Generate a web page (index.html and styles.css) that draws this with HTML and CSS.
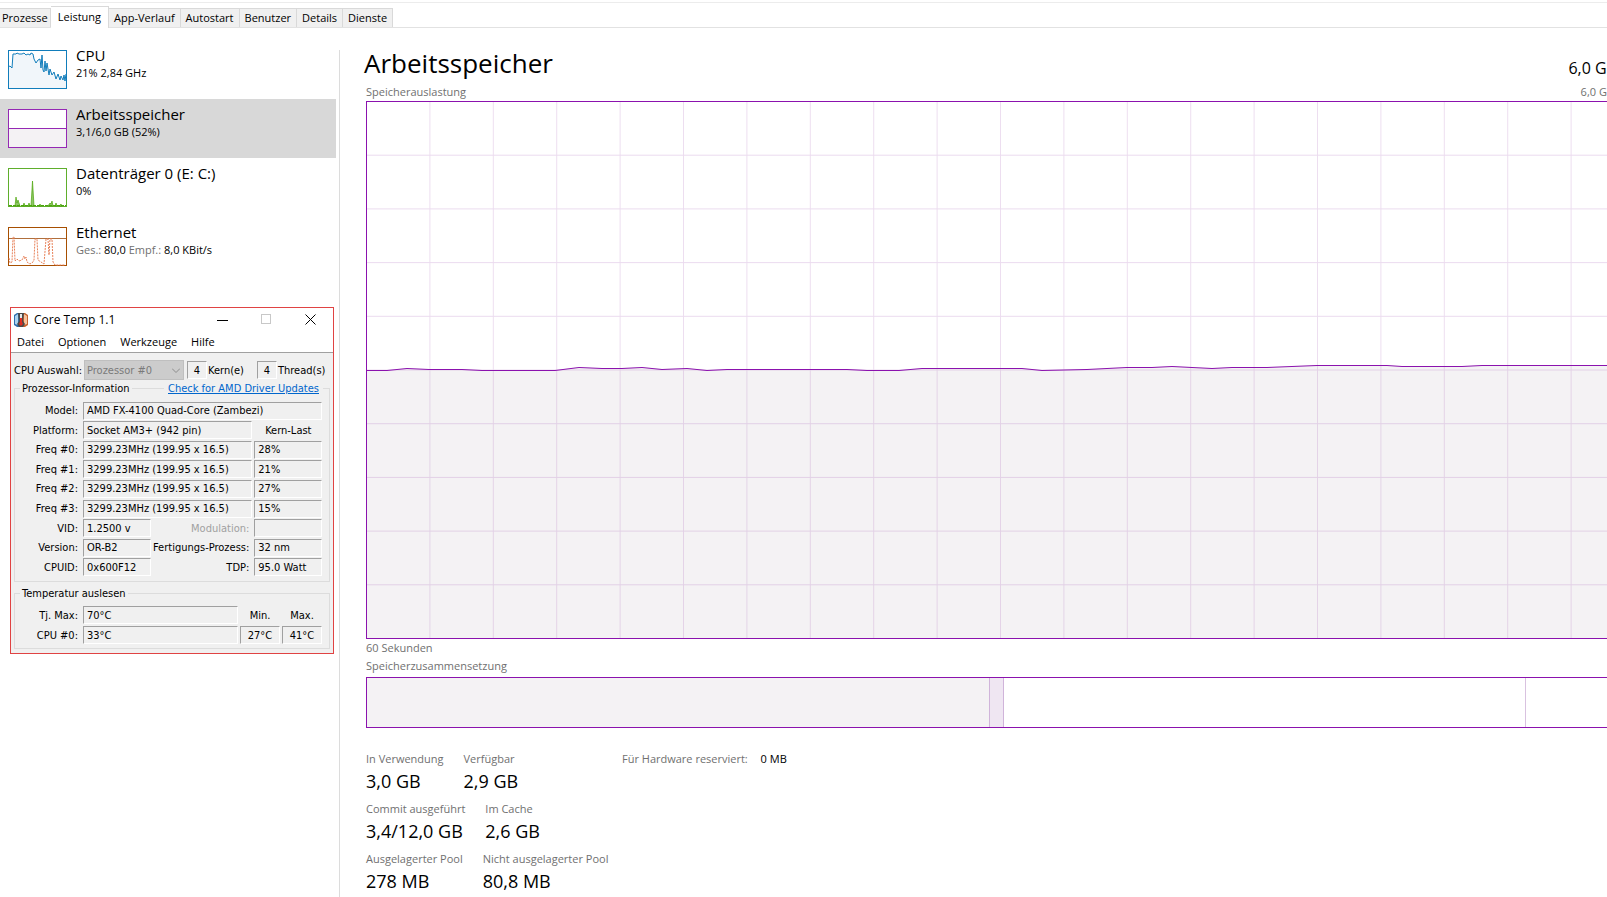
FILE: index.html
```html
<!DOCTYPE html>
<html lang="de">
<head>
    <meta charset="UTF-8">
    <meta name="viewport" content="width=device-width, initial-scale=1.0">
    <title>Task-Manager</title>
    <link rel="stylesheet" href="styles.css">
</head>
<body>

<div class="tabs" role="tablist">
    <button class="tab" role="tab">Prozesse</button>
    <button class="tab active" role="tab" aria-selected="true">Leistung</button>
    <button class="tab" role="tab">App-Verlauf</button>
    <button class="tab" role="tab">Autostart</button>
    <button class="tab" role="tab">Benutzer</button>
    <button class="tab" role="tab">Details</button>
    <button class="tab" role="tab">Dienste</button>
</div>

<div class="content">
    <div class="sidebar">
        <button class="item">
            <svg class="thumb" viewBox="0 0 59 39">
                <rect x="0.5" y="0.5" width="58" height="38" fill="#fff"/>
                <path d="M0 17L2 16L4 18L5 4L8 4L9 3L11 4L14 4L16 3L18 5L20 4L22 5L23 3L25 4L26 9L28 13L30 10L32 9L33 18L34 5L35 20L36 22L37 11L38 21L39 13L41 25L42 19L44 25L46 22L48 29L50 24L52 30L53 26L55 30L56 25L57 31L58 24L58 38L0 38Z" fill="#f1f6fa"/>
                <path d="M0 17L2 16L4 18L5 4L8 4L9 3L11 4L14 4L16 3L18 5L20 4L22 5L23 3L25 4L26 9L28 13L30 10L32 9L33 18L34 5L35 20L36 22L37 11L38 21L39 13L41 25L42 19L44 25L46 22L48 29L50 24L52 30L53 26L55 30L56 25L57 31L58 24" fill="none" stroke="#117dbb"/>
                <rect x="0.5" y="0.5" width="58" height="38" fill="none" stroke="#117dbb"/>
            </svg>
            <span class="item-text">
                <span class="item-title">CPU</span>
                <span class="item-sub">21% 2,84 GHz</span>
            </span>
        </button>
        <button class="item selected">
            <svg class="thumb" viewBox="0 0 59 39">
                <rect x="0.5" y="0.5" width="58" height="38" fill="#fff"/>
                <rect x="1" y="19" width="57" height="19" fill="#f4f2f4"/>
                <path d="M0 19.5H59" stroke="#9528b4"/>
                <rect x="0.5" y="0.5" width="58" height="38" fill="none" stroke="#9528b4"/>
            </svg>
            <span class="item-text">
                <span class="item-title">Arbeitsspeicher</span>
                <span class="item-sub">3,1/6,0 GB (52%)</span>
            </span>
        </button>
        <button class="item">
            <svg class="thumb" viewBox="0 0 59 39">
                <rect x="0.5" y="0.5" width="58" height="38" fill="#fff" stroke="#5fae2c"/>
                <path d="M7 38L8 29L9 35L10 32L12 38ZM15 38L16 35L17 38ZM20 38L21 35L22 38ZM23 38L24.5 13L26 38ZM31 38L32 36L33 38ZM40 38L42 35L43 36L44 33L45 38ZM47 38L48 35L49 38ZM51 38L53 36L54 38Z" fill="#8cc465" stroke="#4da60c" stroke-width="0.7"/>
                <path d="M1 37.5H58" stroke="#4da60c" stroke-dasharray="3 1"/>
            </svg>
            <span class="item-text">
                <span class="item-title">Datenträger 0 (E: C:)</span>
                <span class="item-sub">0%</span>
            </span>
        </button>
        <button class="item">
            <svg class="thumb" viewBox="0 0 59 39">
                <rect x="0.5" y="0.5" width="58" height="38" fill="#fff" stroke="#a74f01"/>
                <path d="M1 11.5H58" stroke="#b06f3c"/>
                <path d="M1 31L2 36L4 35L5 10L6 10L7 34L9 32L11 34L14 33L16 29L17 32L18 30L19 35L22 37L25 35L26 33L27 12L29 12L30 33L33 35L36 37L38 12L40 12L41 28L42 12L44 12L45 35L47 38L57 38" fill="none" stroke="#e8825a" stroke-dasharray="2 1"/>
            </svg>
            <span class="item-text">
                <span class="item-title">Ethernet</span>
                <span class="item-sub"><span class="muted">Ges.:</span> 80,0 <span class="muted">Empf.:</span> 8,0 KBit/s</span>
            </span>
        </button>

        <!-- Core Temp -->
        <div class="coretemp">
            <div class="ct-title">
                <svg class="ct-icon" viewBox="0 0 14 14">
                    <path d="M0 2L3 0H6V14H3L0 12Z" fill="#2f6fae"/>
                    <path d="M1 3L4 1V12L1 11Z" fill="#a9d3ef"/>
                    <path d="M14 2L11 0H8V14H11L14 12Z" fill="#c9622c"/>
                    <path d="M13 3L10 1V12L13 11Z" fill="#f8c19a"/>
                    <path d="M4 0H10L9 8L11 11L9 14H5L3 11L5 8Z" fill="#4a4a4a"/>
                    <path d="M6 1H8V6H6Z" fill="#e6e6e6"/>
                    <path d="M6 5H8V9L9 11L7 13L5 11L6 9Z" fill="#e02b20"/>
                </svg>
                <span class="ct-name">Core Temp 1.1</span>
                <button class="win-btn" aria-label="Minimieren"><svg viewBox="0 0 11 11"><path d="M0 6.500H11" stroke="#000"/></svg></button>
                <button class="win-btn" aria-label="Maximieren" disabled><svg viewBox="0 0 11 11"><rect x="0.5" y="0.5" width="9" height="9" fill="none" stroke="#c8c8c8"/></svg></button>
                <button class="win-btn" aria-label="Schließen"><svg viewBox="0 0 11 11"><path d="M0.500 0.500L10.500 10.500M10.500 0.500L0.500 10.500" stroke="#000"/></svg></button>
            </div>
            <div class="ct-menu">
                <button>Datei</button>
                <button>Optionen</button>
                <button>Werkzeuge</button>
                <button>Hilfe</button>
            </div>
            <div class="ct-body">
                <div class="ct-cpu">
                    <label for="cpu">CPU Auswahl:</label>
                    <span class="ct-select">
                        <select id="cpu" disabled><option>Prozessor #0</option></select>
                        <svg viewBox="0 0 8 5"><path d="M0 0.500L4 4.500L8 0.500" fill="none" stroke="#8c8c8c"/></svg>
                    </span>
                    <input class="field small" id="kerne" value="4" readonly>
                    <label class="unit" for="kerne">Kern(e)</label>
                    <input class="field small" id="threads" value="4" readonly>
                    <label for="threads">Thread(s)</label>
                </div>

                <fieldset class="info">
                    <legend>Prozessor-Information</legend>
                    <a class="driver" href="#">Check for AMD Driver Updates</a>
                    <div class="info-grid">
                        <label for="model">Model:</label>
                        <input class="field w3" id="model" value="AMD FX-4100 Quad-Core (Zambezi)" readonly>
                        <label for="platform">Platform:</label>
                        <input class="field w2" id="platform" value="Socket AM3+ (942 pin)" readonly>
                        <span class="center">Kern-Last</span>
                        <label for="f0">Freq #0:</label>
                        <input class="field w2" id="f0" value="3299.23MHz (199.95 x 16.5)" readonly>
                        <input class="field" aria-label="Kern-Last 0" value="28%" readonly>
                        <label for="f1">Freq #1:</label>
                        <input class="field w2" id="f1" value="3299.23MHz (199.95 x 16.5)" readonly>
                        <input class="field" aria-label="Kern-Last 1" value="21%" readonly>
                        <label for="f2">Freq #2:</label>
                        <input class="field w2" id="f2" value="3299.23MHz (199.95 x 16.5)" readonly>
                        <input class="field" aria-label="Kern-Last 2" value="27%" readonly>
                        <label for="f3">Freq #3:</label>
                        <input class="field w2" id="f3" value="3299.23MHz (199.95 x 16.5)" readonly>
                        <input class="field" aria-label="Kern-Last 3" value="15%" readonly>
                        <label for="vid">VID:</label>
                        <input class="field" id="vid" value="1.2500 v" readonly>
                        <label class="off" for="mod">Modulation:</label>
                        <input class="field" id="mod" value="" readonly>
                        <label for="version">Version:</label>
                        <input class="field" id="version" value="OR-B2" readonly>
                        <label for="prozess">Fertigungs-Prozess:</label>
                        <input class="field" id="prozess" value="32 nm" readonly>
                        <label for="cpuid">CPUID:</label>
                        <input class="field" id="cpuid" value="0x600F12" readonly>
                        <label for="tdp">TDP:</label>
                        <input class="field" id="tdp" value="95.0 Watt" readonly>
                    </div>
                </fieldset>

                <fieldset class="temp">
                    <legend>Temperatur auslesen</legend>
                    <div class="temp-grid">
                        <label for="tj">Tj. Max:</label>
                        <input class="field" id="tj" value="70°C" readonly>
                        <span class="center">Min.</span>
                        <span class="center">Max.</span>
                        <label for="t0">CPU #0:</label>
                        <input class="field" id="t0" value="33°C" readonly>
                        <input class="field center" aria-label="Min." value="27°C" readonly>
                        <input class="field center" aria-label="Max." value="41°C" readonly>
                    </div>
                </fieldset>
            </div>
        </div>
    </div>

    <div class="main">
        <div class="main-head">
            <h1>Arbeitsspeicher</h1>
            <span class="total">6,0 GB</span>
        </div>
        <div class="caption"><span>Speicherauslastung</span><span>6,0 GB</span></div>
        <svg class="chart" viewBox="0 0 1249 536" preserveAspectRatio="none">
            <defs>
                <pattern id="grid" width="63.4" height="53.7" patternUnits="userSpaceOnUse">
                    <path d="M63 0V54M0 53.200H64" fill="none" stroke="#821e9b" stroke-opacity="0.160"/>
                </pattern>
            </defs>
            <path d="M0 268H20L40 266L62 267H95L115 268H188L212 265L235 266H255L275 265L295 267L320 266L340 268L360 267H480L500 268H532L555 266H655L675 268L720 267L760 265H785L805 264L825 265L845 266L865 265H900L950 263H1020L1035 264H1095L1115 263H1249V536H0Z" fill="#f4f2f4"/>
            <rect width="1249" height="536" fill="url(#grid)"/>
            <path d="M0 268.500H20L40 266.500L62 267.500H95L115 268.500H188L212 265.500L235 266.500H255L275 265.500L295 267.500L320 266.500L340 268.500L360 267.500H480L500 268.500H532L555 266.500H655L675 268.500L720 267.500L760 265.500H785L805 264.500L825 265.500L845 266.500L865 265.500H900L950 263.500H1020L1035 264.500H1095L1115 263.500H1249" fill="none" stroke="#8b12ae"/>
        </svg>
        <div class="caption"><span>60 Sekunden</span></div>
        <div class="caption"><span>Speicherzusammensetzung</span></div>
        <div class="composition">
            <div class="used"></div>
            <div class="modified"></div>
            <div class="standby"></div>
            <div class="free"></div>
        </div>

        <div class="stats">
            <div class="stats-left">
                <div class="stat-row">
                    <div class="stat"><span>In Verwendung</span><b>3,0 GB</b></div>
                    <div class="stat"><span>Verfügbar</span><b>2,9 GB</b></div>
                </div>
                <div class="stat-row">
                    <div class="stat"><span>Commit ausgeführt</span><b>3,4/12,0 GB</b></div>
                    <div class="stat"><span>Im Cache</span><b>2,6 GB</b></div>
                </div>
                <div class="stat-row">
                    <div class="stat"><span>Ausgelagerter Pool</span><b>278 MB</b></div>
                    <div class="stat"><span>Nicht ausgelagerter Pool</span><b>80,8 MB</b></div>
                </div>
            </div>
            <div class="reserved"><span>Für Hardware reserviert:</span> <b>0 MB</b></div>
        </div>
    </div>
</div>

</body>
</html>
```

FILE: styles.css
```css
* {
    box-sizing: border-box;
}
body {
    margin: 0;
    min-height: 100vh;
    display: flex;
    flex-direction: column;
    overflow: hidden;
    background-color: #fff;
    color: #000;
    font-family: "Open Sans", "Noto Sans", sans-serif;
    font-size: 12px;
}
button, input, select {
    font: inherit;
    color: inherit;
    margin: 0;
    padding: 0;
    border: none;
    background: none;
}
/* tabs */
.tabs {
    display: flex;
    align-items: flex-end;
    height: 26px;
    margin-top: 2px;
    flex: none;
    border-top: 1px solid #ececec;
    border-bottom: 1px solid #e2e2e2;
    font-size: 11px;
}
.tab {
    height: 19px;
    padding: 0 5px 1px;
    background-color: #f0f0f0;
    border: 1px solid #d9d9d9;
    border-left: none;
    border-bottom: none;
    white-space: nowrap;
}
.tab:first-child {
    padding: 0 2px 1px;
}
.tab.active {
    height: 22px;
    margin-bottom: -1px;
    padding: 0 7px 3px;
    background-color: #fff;
}
/* layout */
.content {
    flex: 1;
    display: flex;
    padding-top: 12px;
}
.sidebar {
    width: 336px;
    flex: none;
}
.item {
    display: flex;
    width: 100%;
    height: 59px;
    padding: 8px;
    text-align: left;
}
.item.selected {
    background-color: #d8d8d8;
}
.thumb {
    width: 59px;
    height: 39px;
    margin-top: 2px;
    flex: none;
}
.item-text {
    display: flex;
    flex-direction: column;
    padding-left: 9px;
}
.item-title {
    font-size: 15px;
    line-height: 14px;
}
.item-sub {
    font-size: 11px;
    line-height: 22px;
}
.muted {
    color: #707070;
}
/* core temp */
.coretemp {
    margin: 31px 2px 0 10px;
    border: 1px solid #e04343;
    background-color: #fff;
    font-size: 11px;
}
.ct-title {
    display: flex;
    align-items: center;
    height: 23px;
    padding: 0 1px 0 3px;
    font-size: 12px;
}
.ct-icon {
    width: 14px;
    height: 14px;
}
.ct-name {
    flex: 1;
    padding-left: 6px;
}
.win-btn {
    width: 44px;
    height: 22px;
}
.win-btn svg {
    width: 11px;
    height: 11px;
    display: block;
    margin: 0 auto;
}
.ct-menu {
    display: flex;
    gap: 14px;
    height: 22px;
    padding-left: 6px;
    border-bottom: 1px solid #a0a0a0;
    font-size: 11px;
}
.ct-body {
    padding: 7px 3px 4px;
    background-color: #f0f0f0;
    font-family: "DejaVu Sans Condensed", "Open Sans", sans-serif;
    font-size: 11px;
}
.ct-cpu {
    display: flex;
    align-items: center;
    height: 20px;
    white-space: nowrap;
}
.ct-select {
    position: relative;
    width: 100px;
    height: 20px;
    margin: 0 3px 0 2px;
}
.ct-select select {
    width: 100%;
    height: 100%;
    padding-left: 2px;
    appearance: none;
    background-color: #ccc;
    border: 1px solid #bfbfbf;
    color: #7a7a7a;
    opacity: 1;
}
.ct-select svg {
    position: absolute;
    right: 4px;
    top: 8px;
    width: 8px;
    height: 5px;
}
.field {
    width: 100%;
    min-width: 0;
    height: 18px;
    padding-left: 3px;
    border-top: 1px solid #a0a0a0;
    border-left: 1px solid #a0a0a0;
    border-right: 1px solid #fff;
    border-bottom: 1px solid #fff;
}
.field.small {
    width: 20px;
    flex: none;
    padding: 0;
    text-align: center;
}
.unit {
    width: 50px;
}
.ct-cpu .field + label {
    padding-left: 1px;
}
fieldset {
    position: relative;
    min-width: 0;
    margin: 0;
    padding: 0 7px 0 4px;
    border: 1px solid #dcdcdc;
}
legend {
    margin-left: 1px;
    padding: 0 2px;
    height: 17px;
    line-height: 17px;
}
.driver {
    position: absolute;
    right: 6px;
    top: -17px;
    padding: 0 4px;
    line-height: 17px;
    background-color: #f0f0f0;
    color: #0066cc;
}
.info-grid {
    display: grid;
    grid-template-columns: 62px 68px 1fr 68px;
    grid-template-rows: repeat(9, 1fr);
    column-gap: 2px;
    height: 176px;
    margin: 4px 0;
    align-items: center;
}
.info-grid label, .temp-grid label {
    padding-right: 3px;
    text-align: right;
    white-space: nowrap;
}
.w2 {
    grid-column: span 2;
}
.w3 {
    grid-column: span 3;
}
.center {
    text-align: center;
    padding-left: 0;
}
.off {
    color: #a0a0a0;
}
.temp {
    margin-top: 3px;
}
.temp-grid {
    display: grid;
    grid-template-columns: 62px 1fr 40px 40px;
    column-gap: 2px;
    row-gap: 2px;
    margin: 4px 0;
    align-items: center;
}
/* memory page */
.main {
    flex: none;
    width: calc(100vw - 329px);
    margin: 10px 0 0 3px;
    padding-left: 26px;
    border-left: 1px solid #dcdcdc;
}
.main-head {
    display: flex;
    justify-content: space-between;
    height: 33px;
}
h1 {
    margin: 0 0 0 -2px;
    font-size: 26px;
    font-weight: normal;
    line-height: 27px;
}
.total {
    font-size: 16px;
    line-height: 36px;
}
.caption {
    display: flex;
    justify-content: space-between;
    height: 18px;
    padding-right: 3px;
    line-height: 18px;
    font-size: 11px;
    color: #707070;
}
.chart {
    display: block;
    width: 100%;
    height: 538px;
    border: 1px solid #8b12ae;
}
.composition {
    display: flex;
    height: 51px;
    margin-top: 2px;
    border: 1px solid #8b12ae;
}
.used {
    flex: 623;
    background-color: #f4f2f4;
}
.modified {
    flex: 13;
    background-color: #efe6f2;
    border-left: 1px solid #d0b4da;
    border-right: 1px solid #d0b4da;
}
.standby {
    flex: 522;
    border-right: 1px solid #d9c2e0;
}
.free {
    flex: 90;
}
.stats {
    display: flex;
    margin-top: 20px;
    color: #707070;
    font-size: 11px;
}
.stats-left {
    width: 256px;
}
.stat-row {
    display: flex;
    gap: 20px;
    height: 50px;
}
.stat {
    display: flex;
    flex-direction: column;
    white-space: nowrap;
}
.stat span, .reserved {
    line-height: 22px;
}
.stat b {
    font-size: 18px;
    font-weight: normal;
    line-height: 23px;
    color: #000;
}
.reserved b {
    margin-left: 10px;
    font-weight: normal;
    color: #000;
}
```
